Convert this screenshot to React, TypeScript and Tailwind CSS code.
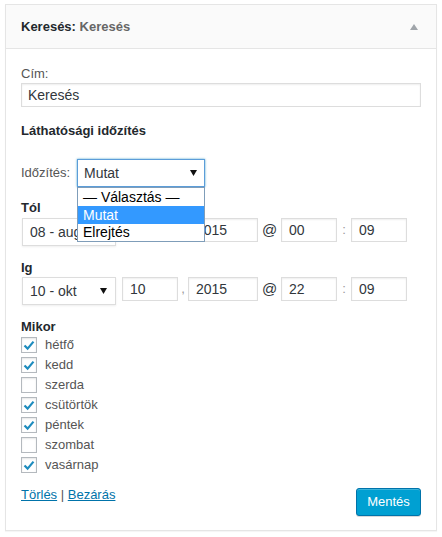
import React from "react";

const days = [
  { label: "hétfő", checked: true },
  { label: "kedd", checked: true },
  { label: "szerda", checked: false },
  { label: "csütörtök", checked: true },
  { label: "péntek", checked: true },
  { label: "szombat", checked: false },
  { label: "vasárnap", checked: true },
];

function Arrow() {
  return (
    <svg width="7" height="6" viewBox="0 0 7 6" className="shrink-0">
      <path d="M0 0 L7 0 L3.5 6 Z" fill="#111" />
    </svg>
  );
}

function Check({ checked }: { checked: boolean }) {
  return (
    <span className="w-[16px] h-[16px] shrink-0 border border-[#b4b9be] bg-white shadow-[inset_0_1px_2px_rgba(0,0,0,0.1)] flex items-center justify-center">
      {checked && (
        <svg width="12" height="12" viewBox="0 0 12 12">
          <path d="M1.5 6.5 L4.6 9.6 L10.5 2.6" fill="none" stroke="#1e8cbe" strokeWidth="2.2" />
        </svg>
      )}
    </span>
  );
}

function Field({ value, w }: { value: string; w: string }) {
  return (
    <div
      className={`${w} h-[24px] border border-[#ddd] shadow-[inset_0_1px_2px_rgba(0,0,0,0.07)] bg-white px-[7px] flex items-center text-[14px] text-[#32373c]`}
    >
      {value}
    </div>
  );
}

function DateRow({ month, day, year, hour, min }: { month: string; day: string; year: string; hour: string; min: string }) {
  return (
    <div className="flex items-start">
      <div className="ml-[1px] w-[94px] h-[28px] border border-[#ddd] shadow-[0_1px_2px_rgba(0,0,0,0.07)] bg-white pl-[7px] pr-[8px] flex items-center justify-between text-[14px] text-[#32373c]">
        <span>{month}</span>
        <Arrow />
      </div>
      <div className="ml-[6px]">
        <Field value={day} w="w-[56px]" />
      </div>
      <span className="w-[10px] h-[24px] flex items-end justify-center pb-[3px] text-[13px] text-[#999]">,</span>
      <Field value={year} w="w-[70px]" />
      <span className="w-[23px] h-[24px] flex items-center justify-center text-[15px] text-[#32373c]">@</span>
      <Field value={hour} w="w-[56px]" />
      <span className="w-[14px] h-[24px] flex items-center justify-center text-[13px] text-[#999]">:</span>
      <Field value={min} w="w-[56px]" />
    </div>
  );
}

export default function App() {
  return (
    <div className="min-h-[537px] bg-white pt-[4px] pl-[5px]" style={{ fontFamily: '"Liberation Sans", Arial, sans-serif' }}>
      <div className="w-[432px] border border-[#e5e5e5] bg-white shadow-[0_1px_1px_rgba(0,0,0,0.04)]">
        {/* Header */}
        <div className="h-[44px] bg-[#fafafa] border-b border-[#e5e5e5] pl-[15px] pr-[18px] flex items-center justify-between">
          <h3 className="text-[13px] font-bold text-[#23282d]">
            Keresés: <span className="text-[#666]">Keresés</span>
          </h3>
          <svg width="8" height="6" viewBox="0 0 8 6">
            <path d="M0 6 L4 0 L8 6 Z" fill="#a0a5aa" />
          </svg>
        </div>

        {/* Body */}
        <div className="px-[15px] pt-[16px] pb-[14px] text-[13px] text-[#555]">
          <div className="h-[18px] leading-[18px]">Cím:</div>
          <div className="h-[24px] border border-[#ddd] shadow-[inset_0_1px_2px_rgba(0,0,0,0.07)] px-[6px] flex items-center text-[14px] text-[#32373c]">
            Keresés
          </div>

          <div className="mt-[15px] h-[18px] leading-[18px] font-bold text-[#23282d]">Láthatósági időzítés</div>

          <div className="relative mt-[19px] flex items-center">
            <span className="w-[56px]">Időzítés:</span>
            <div className="w-[128px] h-[28px] border border-[#5b9dd9] shadow-[0_0_2px_rgba(30,140,190,0.8)] bg-white pl-[6px] pr-[7px] flex items-center justify-between text-[14px] text-[#32373c]">
              <span>Mutat</span>
              <Arrow />
            </div>
            {/* open option list */}
            <div className="absolute left-[56px] top-[28px] w-[128px] z-10 border border-[#7f9db9] bg-white text-[14px] text-black">
              <div className="h-[18px] leading-[18px] pl-[5px]">— Választás —</div>
              <div className="h-[18px] leading-[18px] pl-[5px] bg-[#3399ff] text-white">Mutat</div>
              <div className="h-[17px] leading-[17px] pl-[5px]">Elrejtés</div>
            </div>
          </div>

          <div className="mt-[12px] h-[18px] leading-[18px] font-bold text-[#23282d]">Tól</div>
          <div className="mt-[1px]">
            <DateRow month="08 - aug" day="08" year="2015" hour="00" min="09" />
          </div>

          <div className="mt-[13px] h-[18px] leading-[18px] font-bold text-[#23282d]">Ig</div>
          <DateRow month="10 - okt" day="10" year="2015" hour="22" min="09" />

          <div className="mt-[13px] h-[18px] leading-[18px] font-bold text-[#23282d]">Mikor</div>
          <div className="mt-[1px] flex flex-col gap-[4px]">
            {days.map((d) => (
              <label key={d.label} className="h-[16px] flex items-center gap-[8px]">
                <Check checked={d.checked} />
                <span>{d.label}</span>
              </label>
            ))}
          </div>

          <div className="mt-[13px] flex items-start justify-between">
            <div className="h-[18px] leading-[18px]">
              <a href="#" className="text-[#0073aa] underline">Törlés</a>
              <span className="text-[#555]"> | </span>
              <a href="#" className="text-[#0073aa] underline">Bezárás</a>
            </div>
            <button className="mt-[2px] w-[65px] h-[28px] rounded-[3px] bg-[#00a0d2] border border-[#0073aa] shadow-[inset_0_1px_0_rgba(120,200,230,0.5),0_1px_0_rgba(0,0,0,0.15)] text-white text-[13px]">
              Mentés
            </button>
          </div>
        </div>
      </div>
    </div>
  );
}
